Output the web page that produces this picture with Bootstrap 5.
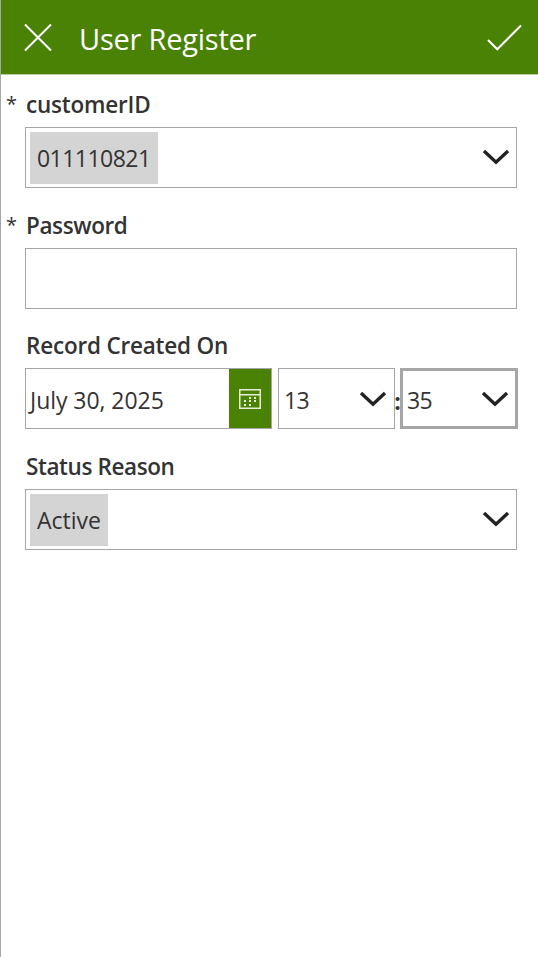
<!DOCTYPE html>
<html lang="en">
<head>
<meta charset="utf-8">
<meta name="viewport" content="width=device-width, initial-scale=1">
<title>User Register</title>
<link href="https://cdn.jsdelivr.net/npm/bootstrap@5.3.0/dist/css/bootstrap.min.css" rel="stylesheet">
<style>
body{font-family:"Open Sans","Noto Sans",sans-serif;color:#333;font-size:23px;background:#fff;overflow:hidden}
.screen{height:957px;border-left:1px solid #a6a6a6}
.topbar{height:74px;background:#4a8206;color:#fff;padding:0 16px 0 23px;box-shadow:0 1px #b7cd9b}
.topbar h1{font-size:29px;line-height:40px;margin:4px 0 0 25px;font-weight:400;letter-spacing:-.23px}
.icon-btn{background:none;border:0;padding:0;display:block;line-height:0}
.icon-btn.save{margin-top:2px}
.icon-btn.shut{margin-top:2px}
.register-form{padding:13px 21px 0 24px}
.field{height:120.7px}
.field-label{position:relative;display:block;height:40px;line-height:36px;padding-left:1px;font-size:22.5px;font-weight:600;white-space:nowrap;letter-spacing:-.2px}
.req{position:absolute;left:-19px;top:-1px;font-weight:400;font-size:20px}
.box{height:61px;border:1px solid #a6a6a6;background:#fff;white-space:nowrap}
.pick{padding:0 6px 2px 4px}
.chip{height:52px;line-height:52px;padding:0 7px 0 7px;background:#d4d4d4;margin-top:2px}
.date-box{width:247px;padding-left:4px}
.cal{width:42px;height:100%;background:#4a8206}
.hour{width:117px;margin-left:6px;padding:0 7px 0 5px}
.minute{width:118px;border-width:3px;padding:0 6px 0 4px}
.hour span,.minute span,.date-text{margin-top:2px}
.sep{width:5px;padding-top:4px;font-weight:700}
.t1{letter-spacing:-.53px}.t2{letter-spacing:-.05px}
.tight{letter-spacing:-.4px}
</style>
<script src="https://cdn.jsdelivr.net/npm/bootstrap@5.3.0/dist/js/bootstrap.bundle.min.js"></script>
</head>
<body>
<svg class="d-none"><symbol id="chev" viewBox="0 0 28 18"><path d="M2 3 14 14.2 26 3" fill="none" stroke="#222" stroke-width="3.4"/></symbol></svg>
<div class="screen">
<header class="topbar d-flex align-items-center">
<button class="icon-btn shut" aria-label="Close"><svg width="30" height="30" viewBox="0 0 30 30"><path d="M1 1.5 27 27.5M27 1.5 1 27.5" fill="none" stroke="#fff" stroke-width="2"/></svg></button>
<h1>User Register</h1>
<button class="icon-btn save ms-auto" aria-label="Save"><svg width="35" height="28" viewBox="0 0 35 28"><path d="M1 16 10.3 25.2 34 1.5" fill="none" stroke="#fff" stroke-width="2.1"/></svg></button>
</header>
<main class="register-form">
<div class="field"><label class="field-label"><span class="req">*</span><span>customerID</span></label>
<div class="box pick d-flex align-items-center justify-content-between"><span class="chip t1">011110821</span><svg width="28" height="18"><use href="#chev"/></svg></div></div>
<div class="field"><label class="field-label"><span class="req">*</span><span class="tight">Password</span></label><div class="box"></div></div>
<div class="field"><label class="field-label"><span>Record Created On</span></label>
<div class="d-flex">
<div class="box date-box flex-shrink-0 d-flex align-items-center justify-content-between"><span class="date-text t2">July 30, 2025</span>
<span class="cal d-flex align-items-center justify-content-center"><svg width="22" height="20" viewBox="0 0 22 20"><path d="M.75.75h20.5v18.5H.75zM1 5.7h20" fill="none" stroke="#e6eedc" stroke-width="1.5"/><path d="M10 8h2v2h-2zm5 0h2v2h-2zM5 11h2v2H5zm5 0h2v2h-2zm5 0h2v2h-2zM5 15h2v2H5zm5 0h2v2h-2z" fill="#e6eedc"/></svg></span></div>
<div class="box hour flex-shrink-0 d-flex align-items-center justify-content-between"><span class="t1">13</span><svg width="28" height="18"><use href="#chev"/></svg></div>
<div class="sep flex-shrink-0 d-flex align-items-center justify-content-center">:</div>
<div class="box minute flex-shrink-0 d-flex align-items-center justify-content-between"><span class="t1">35</span><svg width="28" height="18"><use href="#chev"/></svg></div>
</div></div>
<div class="field"><label class="field-label"><span class="tight">Status Reason</span></label>
<div class="box pick d-flex align-items-center justify-content-between"><span class="chip">Active</span><svg width="28" height="18"><use href="#chev"/></svg></div></div>
</main>
</div>
</body>
</html>
